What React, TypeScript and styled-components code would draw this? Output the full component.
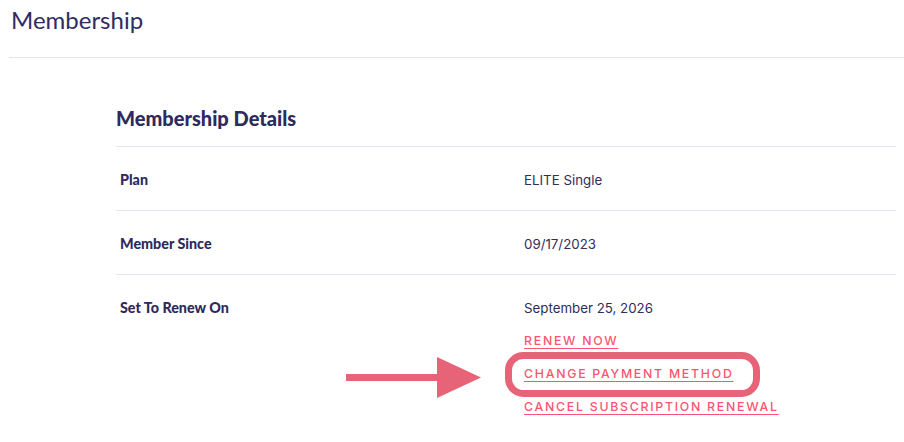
import React from "react";
import styled, { createGlobalStyle } from "styled-components";

const Global = createGlobalStyle`
  html, body { margin: 0; padding: 0; background: #fff; }
  body { font-family: "Lato", "Noto Sans", sans-serif; color: #2b2a5a; }
`;

const Page = styled.div`
  position: relative;
  width: 904px;
  height: 442px;
  overflow: hidden;
  background: #fff;
`;

const Header = styled.header`
  margin-left: 9px;
  height: 51px;
  border-bottom: 1px solid #e6e5ee;
  padding: 6px 0 0 2px;
  box-sizing: content-box;
`;

const PageTitle = styled.h1`
  margin: 0;
  font-family: "Lato", sans-serif;
  font-weight: 400;
  font-size: 24px;
  line-height: 28px;
  color: #2f2c63;
`;

const Section = styled.section`
  margin: 0 8px 0 116px;
  padding-top: 46px;
`;

const SectionTitle = styled.h2`
  margin: 0;
  font-family: "Lato", sans-serif;
  font-weight: 900;
  font-size: 20px;
  line-height: 28px;
  height: 42px;
  border-bottom: 1px solid #e3e4f4;
  color: #2d2a5e;
`;

const Row = styled.div<{ $last?: boolean }>`
  display: grid;
  grid-template-columns: 404px 1fr;
  padding: 24px 4px 0;
  height: ${(p) => (p.$last ? "auto" : "39px")};
  border-bottom: ${(p) => (p.$last ? "none" : "1px solid #e3e4f4")};
`;

const Label = styled.div`
  font-family: "Lato", sans-serif;
  font-weight: 900;
  font-size: 14.3px;
  line-height: 18px;
  color: #2d2a5e;
`;

const Value = styled.div`
  display: flex;
  flex-direction: column;
  gap: 15px;
  font-family: "Inter", "Roboto", sans-serif;
  font-size: 13.3px;
  line-height: 18px;
  color: #2f2d5c;
`;

const Link = styled.a`
  font-family: "Inter", "Roboto", sans-serif;
  font-size: 12.3px;
  font-weight: 500;
  line-height: 18px;
  letter-spacing: 1.75px;
  text-transform: uppercase;
  color: #fb5571;
  text-decoration: underline;
  text-underline-offset: 3px;
  text-decoration-thickness: 1px;
  align-self: flex-start;
  cursor: pointer;
`;

const Annotation = styled.svg`
  position: absolute;
  left: 0;
  top: 0;
  pointer-events: none;
`;

export default function App() {
  return (
    <>
      <Global />
      <Page>
        <Header>
          <PageTitle>Membership</PageTitle>
        </Header>
        <Section>
          <SectionTitle>Membership Details</SectionTitle>
          <Row>
            <Label>Plan</Label>
            <Value>ELITE Single</Value>
          </Row>
          <Row>
            <Label>Member Since</Label>
            <Value>09/17/2023</Value>
          </Row>
          <Row $last>
            <Label>Set To Renew On</Label>
            <Value>
              <span>September 25, 2026</span>
              <Link>Renew Now</Link>
              <Link>Change Payment Method</Link>
              <Link>Cancel Subscription Renewal</Link>
            </Value>
          </Row>
        </Section>
        <Annotation width="904" height="442" viewBox="0 0 904 442">
          <rect x="346" y="374" width="96" height="7" fill="#e76478" />
          <polygon points="437,357 481,377.5 437,398" fill="#e76478" />
          <rect
            x="508.5"
            y="355.5"
            width="248"
            height="38"
            rx="15"
            ry="15"
            fill="none"
            stroke="#e76478"
            strokeWidth="7"
          />
        </Annotation>
      </Page>
    </>
  );
}
